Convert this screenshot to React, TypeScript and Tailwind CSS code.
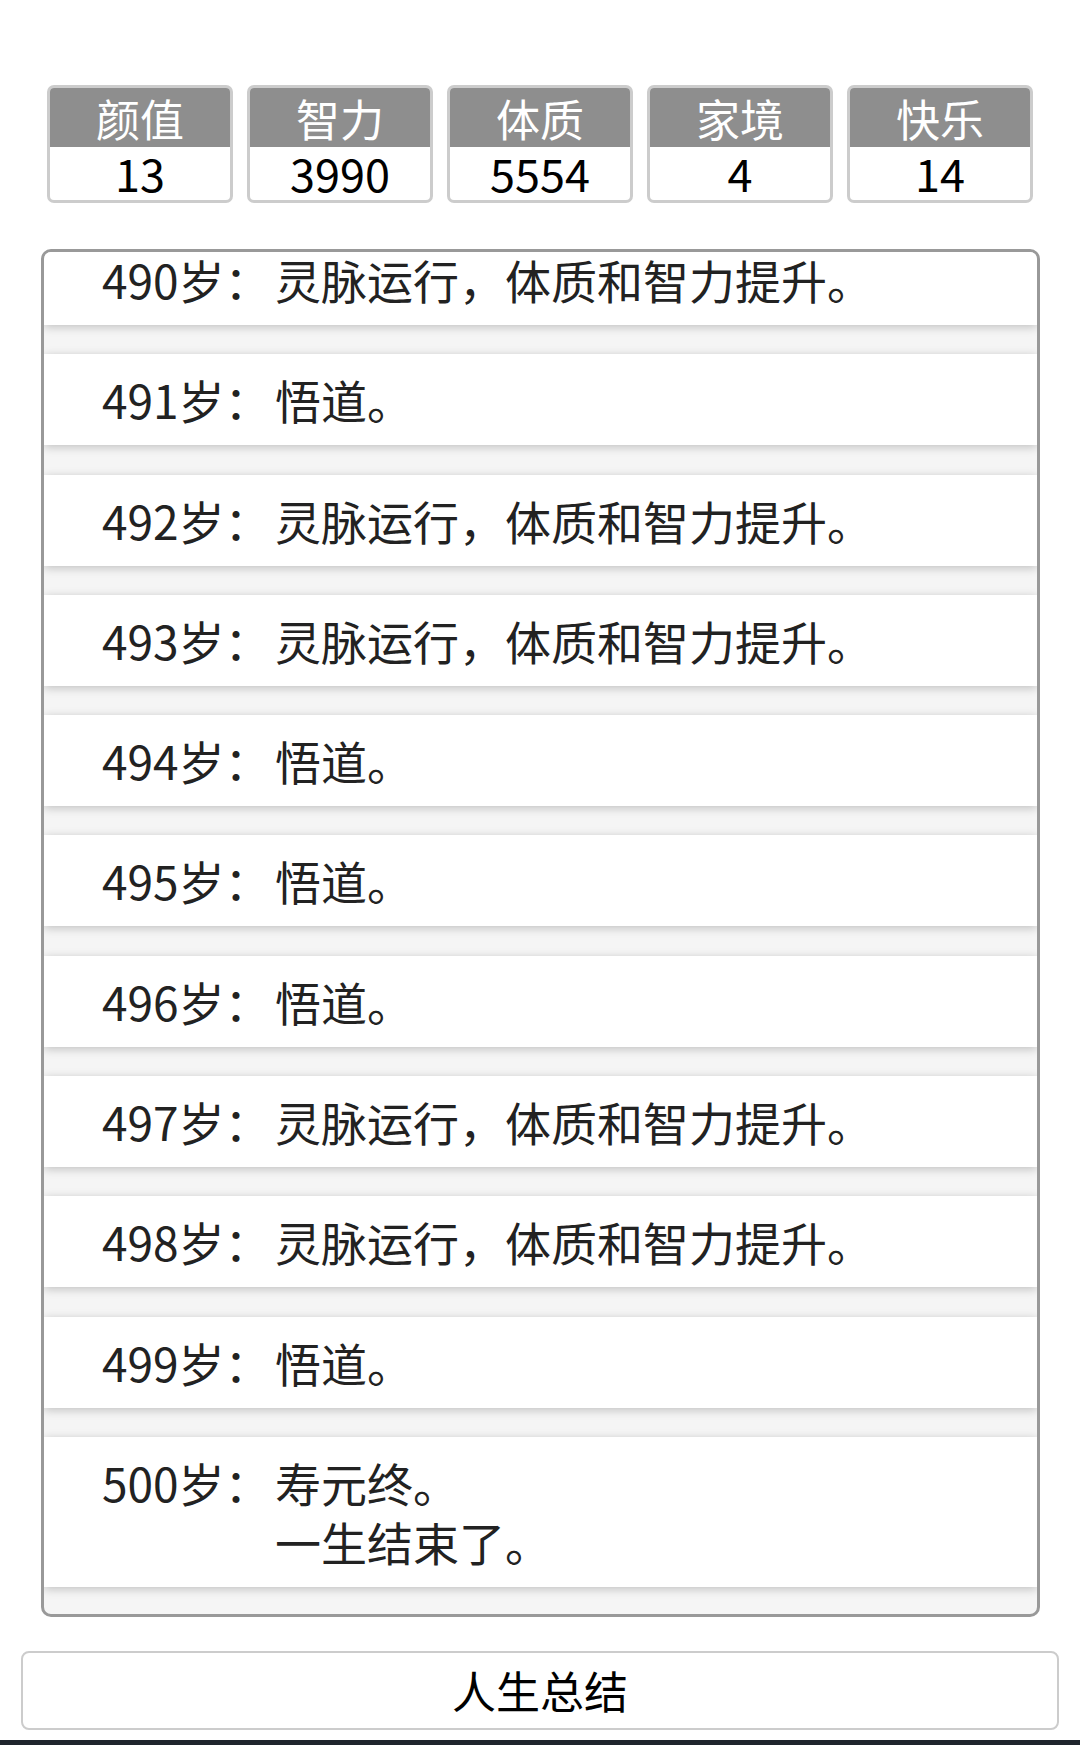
import React from "react";

const FONT = { fontFamily: '"Noto Sans CJK SC", "Noto Sans", sans-serif' };

const STATS = [
  { label: "颜值", value: 13 },
  { label: "智力", value: 3990 },
  { label: "体质", value: 5554 },
  { label: "家境", value: 4 },
  { label: "快乐", value: 14 },
];

const GROW = "灵脉运行，体质和智力提升。";
const WUDAO = "悟道。";

const EVENTS: { age: number; lines: string[] }[] = [
  { age: 490, lines: [GROW] },
  { age: 491, lines: [WUDAO] },
  { age: 492, lines: [GROW] },
  { age: 493, lines: [GROW] },
  { age: 494, lines: [WUDAO] },
  { age: 495, lines: [WUDAO] },
  { age: 496, lines: [WUDAO] },
  { age: 497, lines: [GROW] },
  { age: 498, lines: [GROW] },
  { age: 499, lines: [WUDAO] },
  { age: 500, lines: ["寿元终。", "一生结束了。"] },
];

function StatBox({ label, value }: { label: string; value: number }) {
  return (
    <div className="flex flex-col h-[118px] border-[3px] border-[#cccccc] rounded-[7px] overflow-hidden bg-white">
      <div className="h-[59px] flex items-center justify-center bg-[#8e8e8e] text-white text-[44px] leading-none">
        {label}
      </div>
      <div className="flex-1 flex items-center justify-center text-black text-[45px] leading-none pb-[2px]">
        {value}
      </div>
    </div>
  );
}

export default function App() {
  return (
    <div className="w-[1080px] h-[1745px] bg-white flex flex-col overflow-hidden" style={FONT}>
      <div className="shrink-0 grid grid-cols-5 gap-[14px] px-[47px] pt-[85px]">
        {STATS.map((s) => (
          <StatBox key={s.label} label={s.label} value={s.value} />
        ))}
      </div>

      <div className="shrink-0 mt-[46px] ml-[41px] mr-[40px] h-[1368px] border-[3px] border-[#999999] rounded-[10px] overflow-hidden bg-[#f5f5f5]">
        <div className="flex flex-col gap-[29.3px] -mt-[18px]">
          {EVENTS.map((e) => (
            <div
              key={e.age}
              className="flex bg-white pl-[58px] py-[16px] text-[46px] leading-[59px] text-[#222222] shadow-[0_2px_9px_rgba(0,0,0,0.22)]"
            >
              <span className="w-[173px] shrink-0">{e.age}岁：</span>
              <div className="flex flex-col">
                {e.lines.map((l) => (
                  <span key={l}>{l}</span>
                ))}
              </div>
            </div>
          ))}
        </div>
      </div>

      <button
        type="button"
        className="shrink-0 mt-[34px] mx-[21px] h-[79px] border-2 border-[#cccccc] rounded-[8px] bg-white text-black text-[44px] leading-[1.2] text-center"
      >
        人生总结
      </button>

      <div className="shrink-0 mt-[10px] h-[20px] bg-[#1f252d]" />
    </div>
  );
}
